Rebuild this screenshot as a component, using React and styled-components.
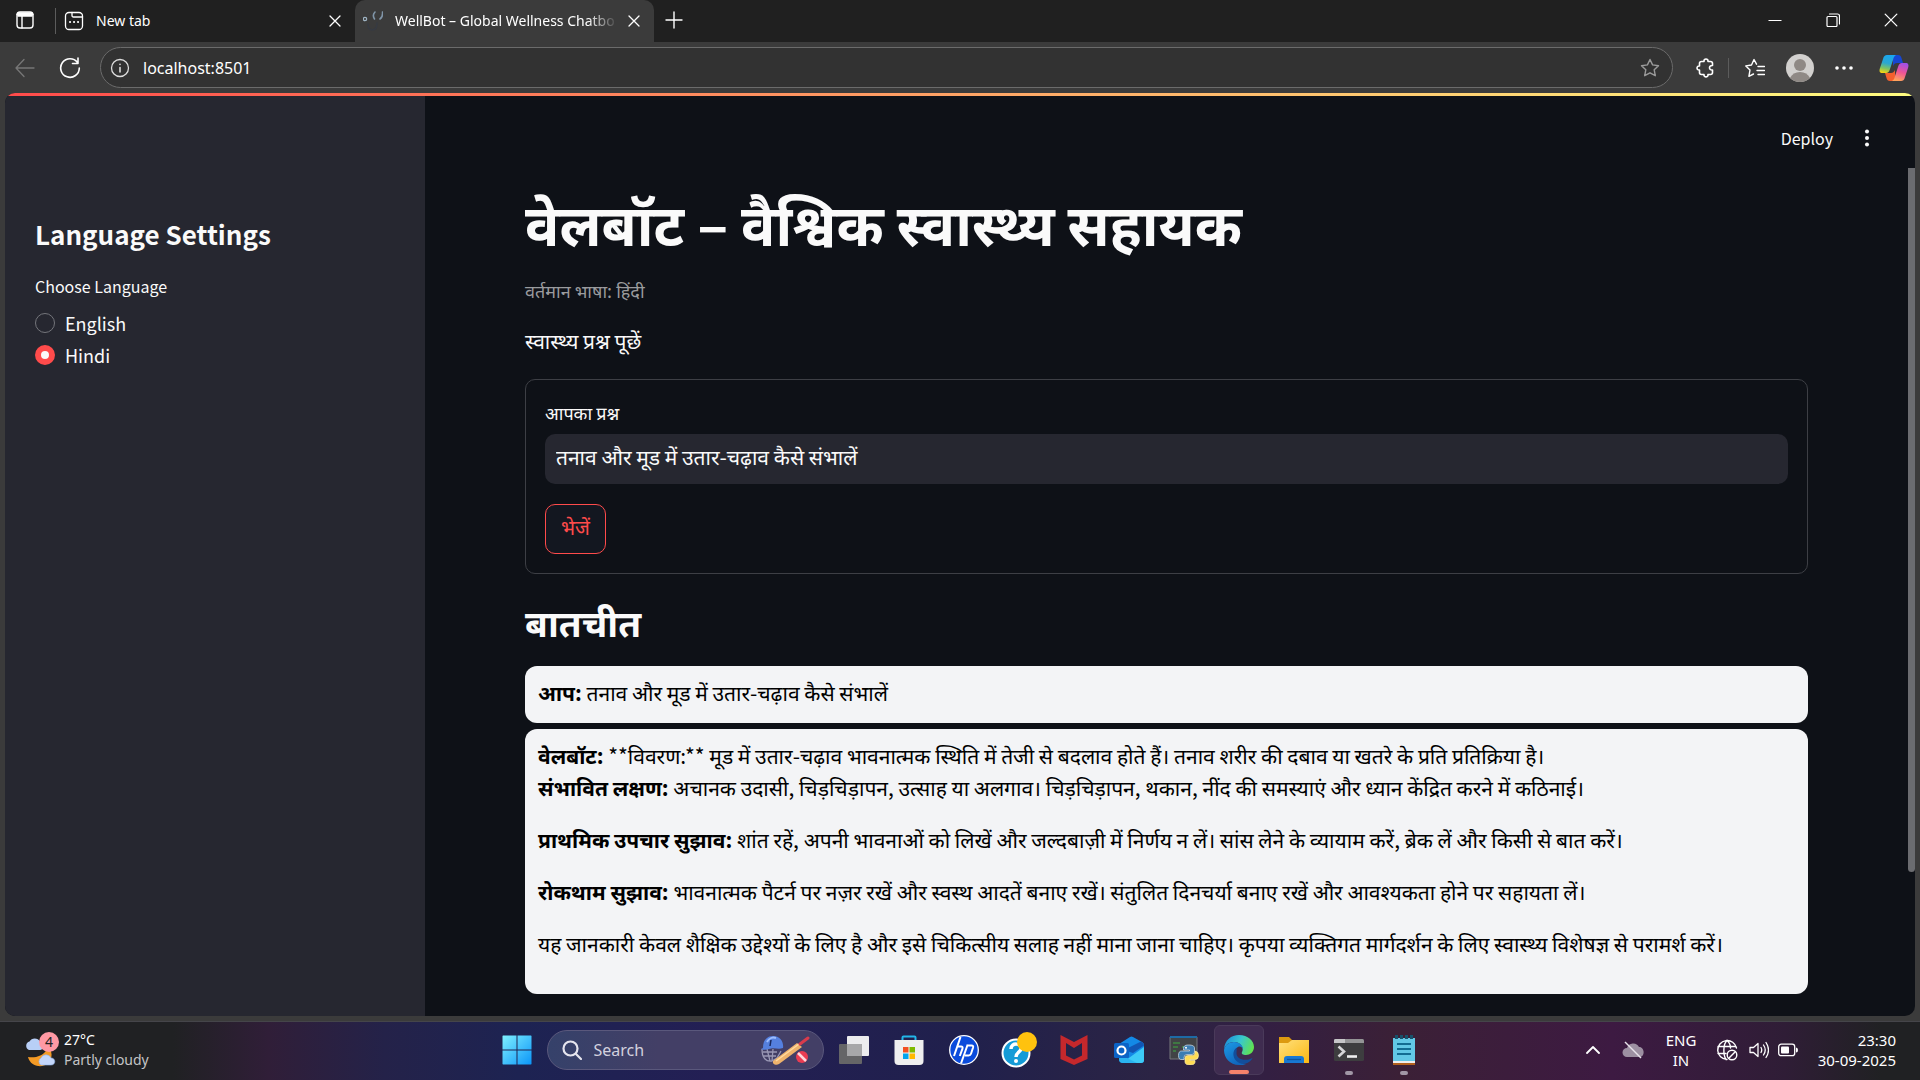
import React, { useState } from "react";
import styled, { createGlobalStyle, css } from "styled-components";

const ui = `"Noto Sans", "Open Sans", sans-serif`;
const body = `"Noto Sans CJK SC", "Noto Sans Devanagari", "Noto Sans", sans-serif`;

const Global = createGlobalStyle`
  *, *::before, *::after { box-sizing: border-box; }
  body { margin: 0; background: #3b3b3b; }
  button { font: inherit; color: inherit; background: none; border: 0; padding: 0; }
  h1, h2, p { margin: 0; }
`;

const Desktop = styled.div`
  min-height: 100vh;
  display: flex;
  flex-direction: column;
  background: #3b3b3b;
  color: #fff;
  font-family: ${ui};
`;

/* ---------- Browser chrome ---------- */

const TabStrip = styled.header`
  display: flex;
  height: 42px;
  background: #202020;
`;

const IconButton = styled.button`
  flex: none;
  display: grid;
  place-items: center;
  width: ${(p) => p.$w || 40}px;
  height: 40px;
  color: ${(p) => p.$color || "#fff"};
  svg { display: block; }
`;

const Divider = styled.span`
  flex: none;
  align-self: center;
  width: 1px;
  height: ${(p) => p.$h}px;
  margin-left: ${(p) => p.$gap || 0}px;
  background: #5c5c5c;
`;

const Tab = styled.div`
  display: flex;
  align-items: center;
  width: 299px;
  height: 42px;
  padding: 0 4px 0 8px;
  font-size: 14px;
  border-radius: 10px 10px 0 0;
  background: ${(p) => (p.$active ? "#3b3b3b" : "transparent")};
  svg { flex: none; }
`;

const TabTitle = styled.span`
  flex: 1;
  margin-left: 12px;
  overflow: hidden;
  white-space: nowrap;
  line-height: 40px;
  ${(p) => p.$fade && css`mask-image: linear-gradient(90deg, #000 86%, transparent);`}
`;

const WindowButtons = styled.div`
  display: flex;
  margin-left: auto;
`;

const Toolbar = styled.nav`
  display: flex;
  align-items: center;
  height: 51px;
  padding-left: 3px;
`;

const AddressBar = styled.form`
  flex: 1;
  display: flex;
  align-items: center;
  height: 41px;
  margin: 0 11px 0 8px;
  border: 1px solid #6b6b6b;
  border-radius: 21px;
  background: #323232;
`;

const AddressInput = styled.input`
  flex: 1;
  min-width: 0;
  border: 0;
  outline: 0;
  padding: 0 0 0 4px;
  background: none;
  color: #fff;
  font: 16px ${ui};
`;

/* ---------- Page ---------- */

const Page = styled.div`
  position: relative;
  flex: 1;
  display: flex;
  margin: 0 5px 5px;
  overflow: hidden;
  border-radius: 10px;
  background: #0e1117;
  font-family: ${body};
  color: #fafafa;
  &::before {
    content: "";
    position: absolute;
    inset: 0 0 auto;
    height: 3px;
    background: linear-gradient(90deg, #ff4b4b, #fffd80);
  }
`;

const Sidebar = styled.aside`
  flex: none;
  width: 420px;
  padding: 119px 30px 0;
  background: #262730;
`;

const SidebarTitle = styled.h2`
  font-size: 26px;
  line-height: 44px;
  font-weight: 700;
`;

const Choices = styled.fieldset`
  display: flex;
  flex-direction: column;
  margin: 18px 0 0;
  padding: 0;
  border: 0;
  legend { padding: 0; margin-bottom: 9px; font-size: 16px; line-height: 24px; }
`;

const Choice = styled.label`
  display: flex;
  align-items: center;
  gap: 10px;
  font-size: 18px;
  line-height: 32px;
`;

const Radio = styled.input`
  appearance: none;
  flex: none;
  width: 20px;
  height: 20px;
  margin: 0;
  border: 1px solid #74757b;
  border-radius: 50%;
  &:checked { border: 6px solid #ff4b4b; background: #fafafa; }
`;

const Main = styled.main`
  position: relative;
  flex: 1;
  min-width: 0;
  padding: 0 107px 0 100px;
`;

const PageActions = styled.div`
  display: flex;
  align-items: center;
  justify-content: flex-end;
  gap: 14px;
  height: 90px;
  margin-right: -79px;
  font-size: 16px;
`;

const Title = styled.h1`
  margin-top: 5px;
  font-size: 57px;
  line-height: 66px;
  font-weight: 700;
  white-space: nowrap;
`;

const Caption = styled.p`
  margin-top: 22px;
  font-size: 18px;
  line-height: 28px;
  color: #9a9b9e;
`;

const Prompt = styled.p`
  margin-top: 20px;
  font-size: 21px;
  line-height: 32px;
`;

const QuestionForm = styled.form`
  display: flex;
  flex-direction: column;
  align-items: flex-start;
  margin-top: 23px;
  padding: 19px;
  border: 1px solid #3d3f45;
  border-radius: 10px;
  label { font-size: 18px; line-height: 27px; }
`;

const QuestionInput = styled.input`
  width: 100%;
  height: 50px;
  margin-top: 8px;
  padding: 0 11px 4px;
  border: 0;
  border-radius: 10px;
  outline: 0;
  background: #262730;
  color: #fafafa;
  font: 21px ${body};
`;

const SubmitButton = styled.button`
  && {
    height: 50px;
    margin-top: 20px;
    padding: 0 15px 4px;
    border: 1px solid #ff4b4b;
    border-radius: 10px;
    background: #131720;
    color: #ff4b4b;
    font-size: 20px;
  }
`;

const ChatTitle = styled.h2`
  margin: 25px 0 23px;
  font-size: 37px;
  line-height: 44px;
  font-weight: 700;
`;

const Bubble = styled.article`
  display: flex;
  flex-direction: column;
  gap: 20px;
  margin-bottom: 6px;
  padding: 10px 13px ${(p) => (p.$long ? 35 : 15)}px;
  border-radius: 12px;
  background: #f3f4f6;
  color: #000;
  font-size: 21px;
  line-height: 32px;
`;

const ScrollThumb = styled.span`
  position: absolute;
  top: 75px;
  right: 0;
  width: 7px;
  height: 704px;
  border-radius: 0 0 4px 4px;
  background: #6b6c70;
`;

/* ---------- Taskbar ---------- */

const Taskbar = styled.footer`
  display: grid;
  grid-template-columns: minmax(0, 1fr) auto minmax(0, 1fr);
  align-items: center;
  height: 59px;
  padding: 0 24px 2px;
  border-top: 1px solid #45454a;
  background: linear-gradient(90deg, #202123 0%, #202123 9%, #301e38 14%, #242249 20%, #1d2352 27%, #231f54 37%, #20204c 50%, #2b2444 60%, #331f42 66%, #3b2036 73%, #3d1a42 84%, #2f1d36 93%, #202123 98%);
`;

const Weather = styled.button`
  justify-self: start;
  display: flex;
  align-items: center;
  gap: 5px;
  text-align: left;
  font-size: 14px;
  line-height: 20px;
`;

const Muted = styled.span`
  display: block;
  color: #c4c4c6;
`;

const Apps = styled.div`
  display: flex;
  gap: 5px;
`;

const AppButton = styled.button`
  position: relative;
  display: grid;
  place-items: center;
  width: 50px;
  height: 50px;
  border-radius: 6px;
  ${(p) => p.$active && css`&& { background: #3f2c50; border: 1px solid #4a3a5a; }`}
  ${(p) => p.$mark && css`
    &::after {
      content: "";
      position: absolute;
      bottom: 0;
      left: calc(50% - ${p.$active ? 10 : 4}px);
      width: ${p.$active ? 20 : 8}px;
      height: 4px;
      border-radius: 2px;
      background: ${p.$active ? "#f5826b" : "#a197a6"};
    }
  `}
`;

const SearchBox = styled.label`
  display: flex;
  align-items: center;
  align-self: center;
  gap: 12px;
  width: 277px;
  height: 40px;
  padding: 0 12px 0 14px;
  border: 1px solid #5a587c;
  border-radius: 20px;
  background: linear-gradient(90deg, #35416a, #433f66 40%);
  svg { flex: none; }
`;

const SearchInput = styled.input`
  flex: 1;
  min-width: 0;
  border: 0;
  outline: 0;
  padding: 0;
  background: none;
  font: 16px ${ui};
  &::placeholder { color: #d3d1de; opacity: 1; }
`;

const Tray = styled.div`
  justify-self: end;
  display: flex;
  align-items: center;
  font-size: 15px;
  line-height: 20px;
`;

const TrayItem = styled.button`
  display: grid;
  place-items: center;
  width: ${(p) => p.$w}px;
  text-align: ${(p) => p.$align || "center"};
  justify-items: ${(p) => p.$align || "center"};
  white-space: nowrap;
`;

/* ---------- Drawings ---------- */

const Line = ({ s = 20, w = 1, box = 20, children, ...rest }) => (
  <svg width={s} height={s} viewBox={`0 0 ${box} ${box}`} fill="none" stroke="currentColor" strokeWidth={w} strokeLinecap="round" strokeLinejoin="round" aria-hidden="true" {...rest}>
    {children}
  </svg>
);
const Cross = ({ s = 12, w = 1.3 }) => <Line s={s} w={w} box={12}><path d="M1 1l10 10M11 1L1 11" /></Line>;

const star = "M10 1.5l2.6 5.4 5.9.8-4.3 4.1 1.1 5.9-5.3-2.9-5.3 2.9 1.1-5.9L1.5 7.7l5.9-.8z";

const CloudMoon = () => (
  <svg width="35" height="36" viewBox="0 0 35 36" aria-hidden="true">
    <path d="M4 25c6 1 15 0 19-8l4 2c3 11-6 16-13 15-6-1-9-5-10-9z" fill="#f39a25" />
    <path d="M5 18a4.500 4.500 0 0 1 .5-8.500 6 6 0 0 1 10.500 0c4 1 4 8.500 0 8.500z" fill="#b8cff6" />
    <path d="M17 33a4 4 0 0 1 0-7 5.500 5.500 0 0 1 10 0c5 0 5 7 0 7z" fill="#c3d6fa" stroke="#91b1e8" strokeWidth=".6" />
    <circle cx="25" cy="10" r="10" fill="#ff99a4" />
    <text x="25" y="15" textAnchor="middle" fontSize="14" fontFamily="Noto Sans" fill="#222">4</text>
  </svg>
);

const CopilotLogo = () => (
  <svg width="30" height="28" viewBox="0 0 30 28" aria-hidden="true">
    <defs>
      <linearGradient id="cpA" x1=".5" y1="0" x2=".3" y2="1"><stop stopColor="#1aa6ee" /><stop offset=".45" stopColor="#2ba7d0" /><stop offset=".75" stopColor="#7fc460" /><stop offset="1" stopColor="#f8d512" /></linearGradient>
      <linearGradient id="cpB" x1=".7" y1="0" x2=".4" y2="1"><stop stopColor="#a050e8" /><stop offset=".5" stopColor="#ee5397" /><stop offset="1" stopColor="#ffa35c" /></linearGradient>
    </defs>
    <path d="M14 1h5c2 0 3 1 3.500 3l1.500 5h-6c-2 0-3 1-4 3z" fill="#1746d1" />
    <path d="M16 27h-5c-2 0-3-1-3.500-3L6 19h6c2 0 3-1 4-3z" fill="#f4602d" />
    <path d="M8 1h9c-2 1-2.500 3-3 5l-3 9c-.7 2.500-2 4-4 4H3.500c-3 0-3.500-2-2.500-5L4 5c.8-3 2-4 4-4z" fill="url(#cpA)" />
    <path d="M22 27h-9c2-1 2.500-3 3-5l3-9c.7-2.500 2-4 4-4h3.500c3 0 3.500 2 2.500 5l-3 9c-.8 3-2 4-4 4z" fill="url(#cpB)" />
  </svg>
);

const WindowsLogo = () => (
  <svg width="30" height="30" viewBox="0 0 30 30" aria-hidden="true">
    <defs><linearGradient id="win" x1="0" y1="0" x2="1" y2="1"><stop stopColor="#7ff0ff" /><stop offset="1" stopColor="#0b95f8" /></linearGradient></defs>
    <path fill="url(#win)" d="M1 .5h13.500v14H.5V1zM15.500.5H29l.5.5v13.500h-14zM.5 15.500h14v14H1l-.5-.5zM15.500 15.500h14V29l-.5.5H15.500z" />
  </svg>
);

const Cricket = () => (
  <svg width="52" height="32" viewBox="0 0 52 32" aria-hidden="true">
    <path d="M3 15c0 9 4 13 10 12l5-3 4-7M4 18h14M4 22h13M8 15l3 12M14 15l-1 12" fill="none" stroke="#9a98b5" strokeWidth="1.300" />
    <path d="M4 14C4 5 9 2 14 2c7 0 11 6 10 12-5 2-9-1-14 1-3 1-6 1-8 0z" fill="#5580df" />
    <path d="M8 8c2-4 6-5 9-4" stroke="#9cbcff" strokeWidth="2" fill="none" />
    <path d="M12 6l-1 6" stroke="#1a2a60" strokeWidth="1.500" />
    <path d="M14 27L38 9l5 4-23 17c-3 2-7 0-6-3z" fill="#eeb36c" />
    <path d="M17 27L40 10" stroke="#ffdb9f" strokeWidth="1.500" />
    <path d="M41 10l8-6" stroke="#d93b4c" strokeWidth="3" strokeLinecap="round" />
    <circle cx="43" cy="23" r="6" fill="#ea3c52" /><path d="M39 19l8 8" stroke="#ffd7dc" strokeWidth="2.500" />
  </svg>
);

const TaskView = () => (
  <svg width="30" height="30" viewBox="0 0 30 30" aria-hidden="true">
    <rect x="0" y="9" width="23" height="20" rx="1" fill="#656567" /><rect x="8" y="1" width="22" height="20" rx="1" fill="#ececee" />
    <path d="M8 9h15v12H8z" fill="#a7a7a9" />
  </svg>
);

const Store = () => (
  <svg width="30" height="30" viewBox="0 0 30 30" aria-hidden="true">
    <path d="M8.500 7V2.500q0-1 1-1h11q1 0 1 1V7" fill="none" stroke="#22b6ea" strokeWidth="2" />
    <path d="M.5 5h29v21q0 4-4 4h-21q-4 0-4-4z" fill="#efefef" />
    <path d="M9 12h5.500v5.500H9z" fill="#f25022" /><path d="M15.500 12H21v5.500h-5.500z" fill="#7fba00" /><path d="M9 18.500h5.500V24H9z" fill="#00a4ef" /><path d="M15.500 18.500H21V24h-5.500z" fill="#ffb900" />
  </svg>
);

const HpLogo = () => (
  <svg width="30" height="30" viewBox="0 0 30 30" aria-hidden="true">
    <circle cx="15" cy="15" r="14.300" fill="#0a4bdc" stroke="#fff" strokeWidth="1.300" />
    <path d="M11.500 2L5 21M8.200 11.500h3.800q2.200 0 1.400 2.300L10.800 21M18.700 9.500l-6.700 19M18 10.500h4.500q2.200 0 1.500 2.300l-2 6q-.6 1.700-2.400 1.700H16" fill="none" stroke="#fff" strokeWidth="2" />
  </svg>
);

const HelpLogo = () => (
  <svg width="36" height="36" viewBox="0 0 36 36" aria-hidden="true">
    <circle cx="15" cy="21" r="13.500" fill="#149bd7" stroke="#fff" strokeWidth="2" />
    <path d="M10 17c0-7 11-6 10 0-.5 3-5 3.500-5 8" fill="none" stroke="#fff" strokeWidth="3.500" /><circle cx="15" cy="29" r="2" fill="#fff" />
    <circle cx="26" cy="10" r="10" fill="#ffc20e" />
  </svg>
);

const McAfee = () => (
  <svg width="28" height="30" viewBox="0 0 28 30" aria-hidden="true">
    <path fill="#c5282c" d="M.5 0L14 7 27.500 0v24L14 30 .5 24zM6 8v12.500l8 4 8-4V8l-8 5z" fillRule="evenodd" />
  </svg>
);

const Outlook = () => (
  <svg width="30" height="28" viewBox="0 0 30 28" aria-hidden="true">
    <path d="M5 8L16 1q1.500-.8 3 0l9 5q2 1 2 3v15q0 3-3 3H9q-4 0-4-4z" fill="#1389e6" />
    <path d="M10 14L27 5.500q3 1.500 3 4L19 17z" fill="#1156b4" />
    <path d="M8 27L30 11v13q0 3-3 3z" fill="#3dcbf7" /><path d="M5 18l18 9H9q-4 0-4-4z" fill="#2ab4f0" />
    <rect y="7" width="15" height="15" rx="1.500" fill="#0b63c6" /><circle cx="7.500" cy="14.500" r="4" fill="none" stroke="#fff" strokeWidth="2.200" />
  </svg>
);

const Python = () => (
  <svg width="30" height="30" viewBox="0 0 30 30" aria-hidden="true">
    <path d="M1 2h27v22H1z" fill="#414346" stroke="#77797c" /><path d="M1 1h27v2H1z" fill="#1d6aa5" />
    <path d="M4 8h7M4 12h5M13 12h4M4 16h3" stroke="#3f8a42" strokeWidth="1.300" />
    <path d="M19.500 10c-4 0-5 1.500-5 3.500V15h6v1h-8q-3 0-3 4.500t3.500 4h2v-2q0-3 3-3h5q2.500 0 2.500-2.500V13c0-2-2-3-6-3z" fill="#3c7db3" stroke="#d5e2ed" strokeWidth=".7" />
    <path d="M26 16q3.500.5 3.500 4.500t-3.500 4h-5v1h5v1.500c0 2-2 3-5 3s-5-1-5-3V23q0-2.500 3-2.500h4.500q2.500 0 2.500-2.500z" fill="#ffdc55" stroke="#fff0ab" strokeWidth=".7" />
    <circle cx="17" cy="12.800" r="1" fill="#fff" />
  </svg>
);

const Edge = () => (
  <svg width="30" height="30" viewBox="0 0 30 30" aria-hidden="true">
    <defs>
      <linearGradient id="edTop" x1="0" y1=".3" x2="1" y2=".6"><stop stopColor="#1c8fdb" /><stop offset=".5" stopColor="#38c7cf" /><stop offset="1" stopColor="#62e34c" /></linearGradient>
      <linearGradient id="edLow" x1="0" y1="0" x2=".6" y2="1"><stop stopColor="#1c9be6" /><stop offset="1" stopColor="#1064bb" /></linearGradient>
    </defs>
    <path d="M0 14C1 5 7 0 15 0c9 0 15 6 15 12 0 5-4 8-8 8-3 0-5-1-4-3 2-3 0-9-7-10C6 6.500 2 9 0 14z" fill="url(#edTop)" />
    <path d="M0 15c1-5 5-8 10-8 6 0 9 4 9 7-1-2-3-3-5-2-5 2-4 10 1 14 2 2 5 3 7 3-2 1-4 1-7 1C6 30 0 23 0 15z" fill="url(#edLow)" />
    <path d="M12.500 13c-5 3-4 12 3 15 6 2.500 11-1 13-5-8 4-16 1-16-5 0-2 .5-4 0-5z" fill="#124e9b" />
  </svg>
);

const Folder = () => (
  <svg width="30" height="28" viewBox="0 0 30 28" aria-hidden="true">
    <defs><linearGradient id="fold" x2="1" y2="1"><stop stopColor="#ffe07d" /><stop offset="1" stopColor="#fbb812" /></linearGradient></defs>
    <path d="M0 1h10l3 3v8H0z" fill="#dc9a10" /><path d="M0 7h9l4-3h17v23H0z" fill="url(#fold)" />
    <path d="M5 27v-4q0-3 3-3h14q3 0 3 3v4z" fill="#1878d2" /><path d="M8 23.500h14" stroke="#0d559f" strokeWidth="1.300" />
  </svg>
);

const Terminal = () => (
  <svg width="30" height="24" viewBox="0 0 30 24" aria-hidden="true">
    <rect y="1" width="30" height="22" rx="1.500" fill="#3d3d3f" /><path d="M0 5V2.500Q0 1 1.500 1H28.500Q30 1 30 2.500V5z" fill="#949496" /><path d="M0 5V2.500Q0 1 1.500 1H11v4z" fill="#c6c6c8" />
    <path d="M4.500 8.500l5.500 5-5.500 5" fill="none" stroke="#d5d5d7" strokeWidth="2.600" /><path d="M13 18.500h10" stroke="#eee" strokeWidth="2.600" />
  </svg>
);

const Notepad = () => (
  <svg width="24" height="30" viewBox="0 0 24 30" aria-hidden="true">
    <path d="M1 24h22v6H1z" fill="#b1601d" /><path d="M1 24h22v4H1z" fill="#eee" /><path d="M1 3h22v23H1z" fill="#62c8e6" />
    <path d="M5 9h14M5 14h14M5 19h14" stroke="#126c92" strokeWidth="1.800" /><path d="M4.500 0v4M9.500 0v4M14.500 0v4M19.500 0v4" stroke="#17516b" strokeWidth="3" />
  </svg>
);

const apps = [
  ["Task view", TaskView], ["Microsoft Store", Store], ["HP", HpLogo], ["Help", HelpLogo], ["McAfee", McAfee], ["Outlook", Outlook],
  ["IDLE", Python], ["Edge", Edge, "active"], ["File Explorer", Folder], ["Terminal", Terminal, "open"], ["Notepad", Notepad, "open"],
];

export default function App() {
  const [language, setLanguage] = useState("Hindi");
  const [question, setQuestion] = useState("तनाव और मूड में उतार-चढ़ाव कैसे संभालें");
  const stop = (e) => e.preventDefault();

  return (
    <Desktop>
      <Global />
      <TabStrip>
        <IconButton $w={50} aria-label="Tab actions">
          <Line s={20} w={1.4}><rect x="2" y="2" width="16" height="16" rx="3" /><path d="M2 4.500h16M7 6v12" /><path d="M3 3h14v3H3z" fill="currentColor" /></Line>
        </IconButton>
        <Divider $h={26} $gap={5} />
        <Tab>
          <Line s={20} w={1.3}><rect x="1.500" y="1.500" width="17" height="17" rx="3.500" /><path d="M8 1.500v3q0 1.500 1.500 1.500h9" /><path d="M6 11h.1M10 11h.1M14 11h.1" strokeWidth="2" /></Line>
          <TabTitle>New tab</TabTitle>
          <IconButton $w={32} aria-label="Close New tab"><Cross /></IconButton>
        </Tab>
        <Tab $active>
          <Line s={20} w={1.6}><circle cx="2" cy="8" r="1.700" stroke="#9fb4c4" strokeWidth="1.200" /><path d="M12 1q-3 3-.500 7M19.500 1q.5 5-2.500 7" stroke="#8095a8" /><path d="M5 13q0 6 4 6 5 0 5-7" stroke="#363a42" /></Line>
          <TabTitle $fade>WellBot – Global Wellness Chatbo</TabTitle>
          <IconButton $w={32} aria-label="Close WellBot"><Cross /></IconButton>
        </Tab>
        <IconButton aria-label="New tab"><Line s={18} box={18} w={1.4}><path d="M9 1v16M1 9h16" /></Line></IconButton>
        <WindowButtons>
          <IconButton $w={58} aria-label="Minimize"><Line s={14} box={14} strokeLinecap="butt"><path d="M.5 7.500h13" /></Line></IconButton>
          <IconButton $w={58} aria-label="Restore"><Line s={14} box={14} w={1.2}><rect x="1" y="3.500" width="10" height="10" rx="1" /><path d="M3.500 1h8q2 0 2 2v8" /></Line></IconButton>
          <IconButton $w={58} aria-label="Close"><Cross s={14} w={1.1} /></IconButton>
        </WindowButtons>
      </TabStrip>

      <Toolbar>
        <IconButton $w={44} $color="#777" aria-label="Back"><Line s={20} w={1.3}><path d="M19 10H1M9 1.500L1 10l8 8.500" /></Line></IconButton>
        <IconButton $w={45} aria-label="Reload"><Line s={22} box={22} w={1.6}><path d="M18.500 5.500A9.300 9.300 0 1 0 20.300 11M19 1v5.500h-5.500" /></Line></IconButton>
        <AddressBar onSubmit={stop}>
          <IconButton $w={38} type="button" $color="#ddd" aria-label="Site information"><Line s={20} w={1.3}><circle cx="10" cy="10" r="8.500" /><path d="M10 9.500v4.500M10 6.300v.1" strokeWidth="1.600" /></Line></IconButton>
          <AddressInput aria-label="Address" defaultValue="localhost:8501" />
          <IconButton $w={44} type="button" $color="#9b9b9b" aria-label="Add to favourites"><Line s={20} w={1.4}><path d={star} /></Line></IconButton>
        </AddressBar>
        <IconButton $w={44} aria-label="Extensions"><Line s={20} w={1.6}><path d="M16.500 7.500V5.500q0-2-2-2h-2.500c.5-3.300-4.500-3.300-4 0H5.500q-2 0-2 2V8c-3.300-.5-3.300 4.500 0 4v2.500q0 2 2 2H8c-.5 3.200 4.500 3.200 4 0h2.500q2 0 2-2V12c-4 .6-4-4.900 0-4.500z" /></Line></IconButton>
        <Divider $h={20} />
        <IconButton $w={51} aria-label="Favourites"><Line s={20} w={1.4}><path d="M11.500 6.200L9 1.500 6.500 7 .8 7.900 5 12l-1.100 6.300L8.500 16M13 8.500h6.500M12 12.500h7.500M13 16.500h6.500" /></Line></IconButton>
        <IconButton aria-label="Profile">
          <svg width="28" height="28" viewBox="0 0 28 28"><circle cx="14" cy="14" r="14" fill="#d2d0ce" /><circle cx="14" cy="11" r="6" fill="#8f8985" /><path d="M4 24q3-6 10-6t10 6q-4 4-10 4T4 24z" fill="#8f8985" /></svg>
        </IconButton>
        <IconButton $w={48} aria-label="Settings and more"><svg width="18" height="6"><g fill="#fff"><circle cx="2" cy="3" r="1.800" /><circle cx="9" cy="3" r="1.800" /><circle cx="16" cy="3" r="1.800" /></g></svg></IconButton>
        <IconButton $w={52} aria-label="Copilot"><CopilotLogo /></IconButton>
      </Toolbar>

      <Page>
        <Sidebar>
          <SidebarTitle>Language Settings</SidebarTitle>
          <Choices>
            <legend>Choose Language</legend>
            {["English", "Hindi"].map((name) => (
              <Choice key={name}>
                <Radio type="radio" name="language" checked={language === name} onChange={() => setLanguage(name)} />
                {name}
              </Choice>
            ))}
          </Choices>
        </Sidebar>
        <Main>
          <PageActions>
            <button>Deploy</button>
            <IconButton aria-label="Main menu"><svg width="6" height="18"><g fill="#fafafa"><circle cx="3" cy="2.500" r="2" /><circle cx="3" cy="9" r="2" /><circle cx="3" cy="15.500" r="2" /></g></svg></IconButton>
          </PageActions>
          <Title>वेलबॉट – वैश्विक स्वास्थ्य सहायक</Title>
          <Caption>वर्तमान भाषा: हिंदी</Caption>
          <Prompt>स्वास्थ्य प्रश्न पूछें</Prompt>
          <QuestionForm onSubmit={stop}>
            <label htmlFor="question">आपका प्रश्न</label>
            <QuestionInput id="question" value={question} onChange={(e) => setQuestion(e.target.value)} />
            <SubmitButton>भेजें</SubmitButton>
          </QuestionForm>
          <ChatTitle>बातचीत</ChatTitle>
          <Bubble>
            <p><b>आप:</b> तनाव और मूड में उतार-चढ़ाव कैसे संभालें</p>
          </Bubble>
          <Bubble $long>
            <p>
              <b>वेलबॉट:</b> **विवरण:** मूड में उतार-चढ़ाव भावनात्मक स्थिति में तेजी से बदलाव होते हैं। तनाव शरीर की दबाव या खतरे के प्रति प्रतिक्रिया है।
              <br />
              <b>संभावित लक्षण:</b> अचानक उदासी, चिड़चिड़ापन, उत्साह या अलगाव। चिड़चिड़ापन, थकान, नींद की समस्याएं और ध्यान केंद्रित करने में कठिनाई।
            </p>
            <p><b>प्राथमिक उपचार सुझाव:</b> शांत रहें, अपनी भावनाओं को लिखें और जल्दबाज़ी में निर्णय न लें। सांस लेने के व्यायाम करें, ब्रेक लें और किसी से बात करें।</p>
            <p><b>रोकथाम सुझाव:</b> भावनात्मक पैटर्न पर नज़र रखें और स्वस्थ आदतें बनाए रखें। संतुलित दिनचर्या बनाए रखें और आवश्यकता होने पर सहायता लें।</p>
            <p>यह जानकारी केवल शैक्षिक उद्देश्यों के लिए है और इसे चिकित्सीय सलाह नहीं माना जाना चाहिए। कृपया व्यक्तिगत मार्गदर्शन के लिए स्वास्थ्य विशेषज्ञ से परामर्श करें।</p>
          </Bubble>
          <ScrollThumb />
        </Main>
      </Page>

      <Taskbar>
        <Weather>
          <CloudMoon />
          <span>27°C<Muted>Partly cloudy</Muted></span>
        </Weather>
        <Apps>
          <AppButton aria-label="Start"><WindowsLogo /></AppButton>
          <SearchBox>
            <Line s={20} w={2.2} color="#e6e5ee"><circle cx="8.500" cy="8.500" r="7" /><path d="M14 14l5 5" /></Line>
            <SearchInput type="search" placeholder="Search" aria-label="Search" />
            <Cricket />
          </SearchBox>
          {apps.map(([name, Icon, state]) => (
            <AppButton key={name} aria-label={name} $active={state === "active"} $mark={!!state}><Icon /></AppButton>
          ))}
        </Apps>
        <Tray>
          <TrayItem $w={40} aria-label="Show hidden icons"><Line s={14} box={14} w={1.8}><path d="M1 10l6-6 6 6" /></Line></TrayItem>
          <TrayItem $w={40} aria-label="OneDrive">
            <svg width="22" height="18" viewBox="0 0 22 18"><path d="M5 16a4.500 4.500 0 0 1 0-9 6.500 6.500 0 0 1 12-1c6 0 6 10 1 10z" fill="#9d90a2" /><path d="M3 1l16 16" stroke="#e8e2ea" strokeWidth="1.500" /></svg>
          </TrayItem>
          <TrayItem $w={56}><span>ENG<br />IN</span></TrayItem>
          <TrayItem $w={36} aria-label="Network">
            <Line s={22} box={22} w={1.4}><path d="M20.500 9A9.500 9.500 0 1 0 11 20.500M11 1.500C7 5 7 16 10 20.500M11 1.500c2.500 2 3.500 5 3.500 7.500M2 7.500h18M2 14.500h8" /><circle cx="16" cy="16" r="4.800" /><path d="M13 19l6-6" /></Line>
          </TrayItem>
          <TrayItem $w={28} aria-label="Volume"><Line s={20} w={1.3}><path d="M1 7.500h3.500L9 3.500v13L4.500 12.500H1zM12 7.500q1.500 2.500 0 5M14.500 5q3.500 5 0 10M17 2.500q5 7.500 0 15" /></Line></TrayItem>
          <TrayItem $w={30} aria-label="Battery">
            <svg width="20" height="14" viewBox="0 0 20 14"><rect x=".7" y="1.200" width="16" height="11.500" rx="2.500" fill="none" stroke="#fff" strokeWidth="1.300" /><rect x="3" y="3.500" width="8" height="7" rx="1" fill="#fff" /><path d="M18 4.500q2 0 2 2.500t-2 2.500z" fill="#fff" /></svg>
          </TrayItem>
          <TrayItem $w={93} $align="end"><span>23:30<br />30-09-2025</span></TrayItem>
        </Tray>
      </Taskbar>
    </Desktop>
  );
}
